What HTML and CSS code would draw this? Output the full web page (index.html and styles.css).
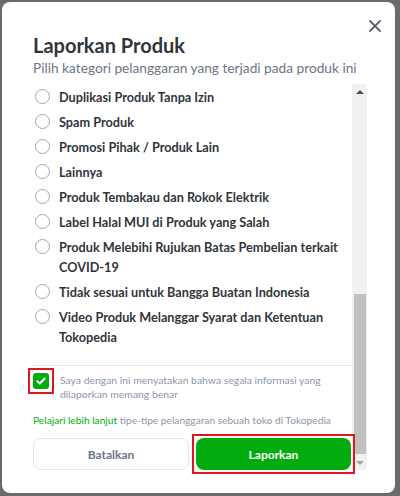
FILE: index.html
```html
<!DOCTYPE html>
<html lang="id">
<head>
    <meta charset="UTF-8">
    <meta name="viewport" content="width=device-width, initial-scale=1.0">
    <title>Laporkan Produk</title>
    <link rel="stylesheet" href="styles.css">
</head>
<body>
    <div class="modal">
        <button class="close-btn" aria-label="Tutup">
            <svg width="12" height="12" viewBox="0 0 12 12">
                <path d="M1 1L11 11M11 1L1 11" stroke="currentColor" stroke-width="1.8" stroke-linecap="round"/>
            </svg>
        </button>
        <h1 class="modal-title">Laporkan Produk</h1>
        <p class="modal-subtitle">Pilih kategori pelanggaran yang terjadi pada produk ini</p>

        <div class="modal-scroll">
            <div class="modal-body">
                <ul class="reason-list">
                    <li class="reason"><span class="radio"></span><span class="reason-label">Duplikasi Produk Tanpa Izin</span></li>
                    <li class="reason"><span class="radio"></span><span class="reason-label">Spam Produk</span></li>
                    <li class="reason"><span class="radio"></span><span class="reason-label">Promosi Pihak / Produk Lain</span></li>
                    <li class="reason"><span class="radio"></span><span class="reason-label">Lainnya</span></li>
                    <li class="reason"><span class="radio"></span><span class="reason-label">Produk Tembakau dan Rokok Elektrik</span></li>
                    <li class="reason"><span class="radio"></span><span class="reason-label">Label Halal MUI di Produk yang Salah</span></li>
                    <li class="reason"><span class="radio"></span><span class="reason-label">Produk Melebihi Rujukan Batas Pembelian terkait COVID-19</span></li>
                    <li class="reason"><span class="radio"></span><span class="reason-label">Tidak sesuai untuk Bangga Buatan Indonesia</span></li>
                    <li class="reason"><span class="radio"></span><span class="reason-label">Video Produk Melanggar Syarat dan Ketentuan Tokopedia</span></li>
                </ul>

                <div class="divider"></div>

                <label class="agree">
                    <span class="highlight highlight-check">
                        <span class="checkbox">
                            <svg width="10" height="8" viewBox="0 0 10 8">
                                <path d="M1.3 4.2L3.8 6.5L8.7 1.5" fill="none" stroke="#fff" stroke-width="1.9" stroke-linecap="round" stroke-linejoin="round"/>
                            </svg>
                        </span>
                    </span>
                    <span class="agree-text">Saya dengan ini menyatakan bahwa segala informasi yang dilaporkan memang benar</span>
                </label>

                <p class="learn-more"><a href="#">Pelajari lebih lanjut</a> tipe-tipe pelanggaran sebuah toko di Tokopedia</p>

                <div class="actions">
                    <button class="btn btn-secondary">Batalkan</button>
                    <span class="highlight highlight-btn">
                        <button class="btn btn-primary">Laporkan</button>
                    </span>
                </div>
            </div>

            <div class="scrollbar">
                <div class="scroll-arrow up"></div>
                <div class="scroll-track">
                    <div class="scroll-thumb"></div>
                </div>
                <div class="scroll-arrow down"></div>
            </div>
        </div>
    </div>
</body>
</html>
```

FILE: styles.css
```css
body {
    margin: 0;
    padding: 2px 5px 3px 2px;
    background: #6b6b6b;
    font-family: "Lato", "Open Sans", sans-serif;
    color: #31353b;
}

.modal {
    position: relative;
    background: #fff;
    border-radius: 8px;
    height: 491px;
    box-sizing: border-box;
    padding: 29px 28px 23px 31px;
}

.close-btn {
    position: absolute;
    top: 17px;
    right: 13px;
    width: 14px;
    height: 14px;
    padding: 1px;
    border: none;
    background: none;
    color: #5b6270;
    cursor: pointer;
}

.modal-title {
    margin: 0;
    font-size: 20px;
    line-height: 28px;
    font-weight: 700;
}

.modal-subtitle {
    margin: 0 0 7px;
    font-size: 13.7px;
    line-height: 18px;
    color: #6d7588;
}

.modal-scroll {
    display: flex;
    height: 386px;
}

.modal-body {
    flex: 1;
    padding-top: 3px;
}

.reason-list {
    list-style: none;
    margin: 0;
    padding: 0;
}

.reason {
    display: flex;
    align-items: flex-start;
    margin-bottom: 5px;
    padding-right: 6px;
}

.radio {
    flex: none;
    width: 13px;
    height: 13px;
    margin: 2px 9px 0 2px;
    border: 1.5px solid #9fa6b0;
    border-radius: 50%;
}

.reason-label {
    font-size: 12.7px;
    line-height: 20px;
    font-weight: 700;
}

.divider {
    height: 1px;
    margin-top: 18px;
    background: #e5e7e9;
}

/* red marker boxes around the checkbox and submit button */
.highlight {
    position: relative;
    display: flex;
    border: 2px solid #e0161f;
    padding: 3px;
}

.highlight-check {
    flex: none;
    margin: -5px 6px 0 -5px;
}

.highlight-btn {
    flex: 1;
    padding: 2px;
    margin: -4px -3px -4px 3px;
}

.agree {
    display: flex;
    align-items: flex-start;
    margin-top: 7px;
}

.checkbox {
    display: flex;
    align-items: center;
    justify-content: center;
    width: 16px;
    height: 16px;
    background: #03ac0e;
    border-radius: 3px;
}

.agree-text {
    font-size: 10.4px;
    line-height: 14px;
    color: #8d96aa;
}

.learn-more {
    margin: 11px 0 0;
    font-size: 10.2px;
    line-height: 16px;
    color: #8d96aa;
}

.learn-more a {
    color: #03ac0e;
    text-decoration: none;
}

.actions {
    display: flex;
    margin-top: 10px;
}

.btn {
    height: 32px;
    border-radius: 8px;
    font-family: inherit;
    font-size: 12px;
    font-weight: 700;
    cursor: pointer;
}

.btn-secondary {
    flex: none;
    width: 156px;
    background: #fff;
    border: 1px solid #e5e7e9;
    color: #6d7588;
}

.btn-primary {
    flex: 1;
    background: #03ac0e;
    border: none;
    color: #fff;
}

.scrollbar {
    flex: none;
    width: 15px;
    display: flex;
    flex-direction: column;
    background: #f1f1f1;
}

.scroll-arrow {
    height: 15px;
    display: flex;
    align-items: center;
    justify-content: center;
}

.scroll-arrow::before {
    content: "";
    border-left: 4px solid transparent;
    border-right: 4px solid transparent;
}

.scroll-arrow.up::before {
    border-bottom: 4px solid #505050;
}

.scroll-arrow.down::before {
    border-top: 4px solid #a3a3a3;
}

.scroll-track {
    flex: 1;
    display: flex;
    flex-direction: column;
    justify-content: flex-end;
}

.scroll-thumb {
    height: 160px;
    margin: 0 1px 1px 2px;
    background: #c1c1c1;
}
```
